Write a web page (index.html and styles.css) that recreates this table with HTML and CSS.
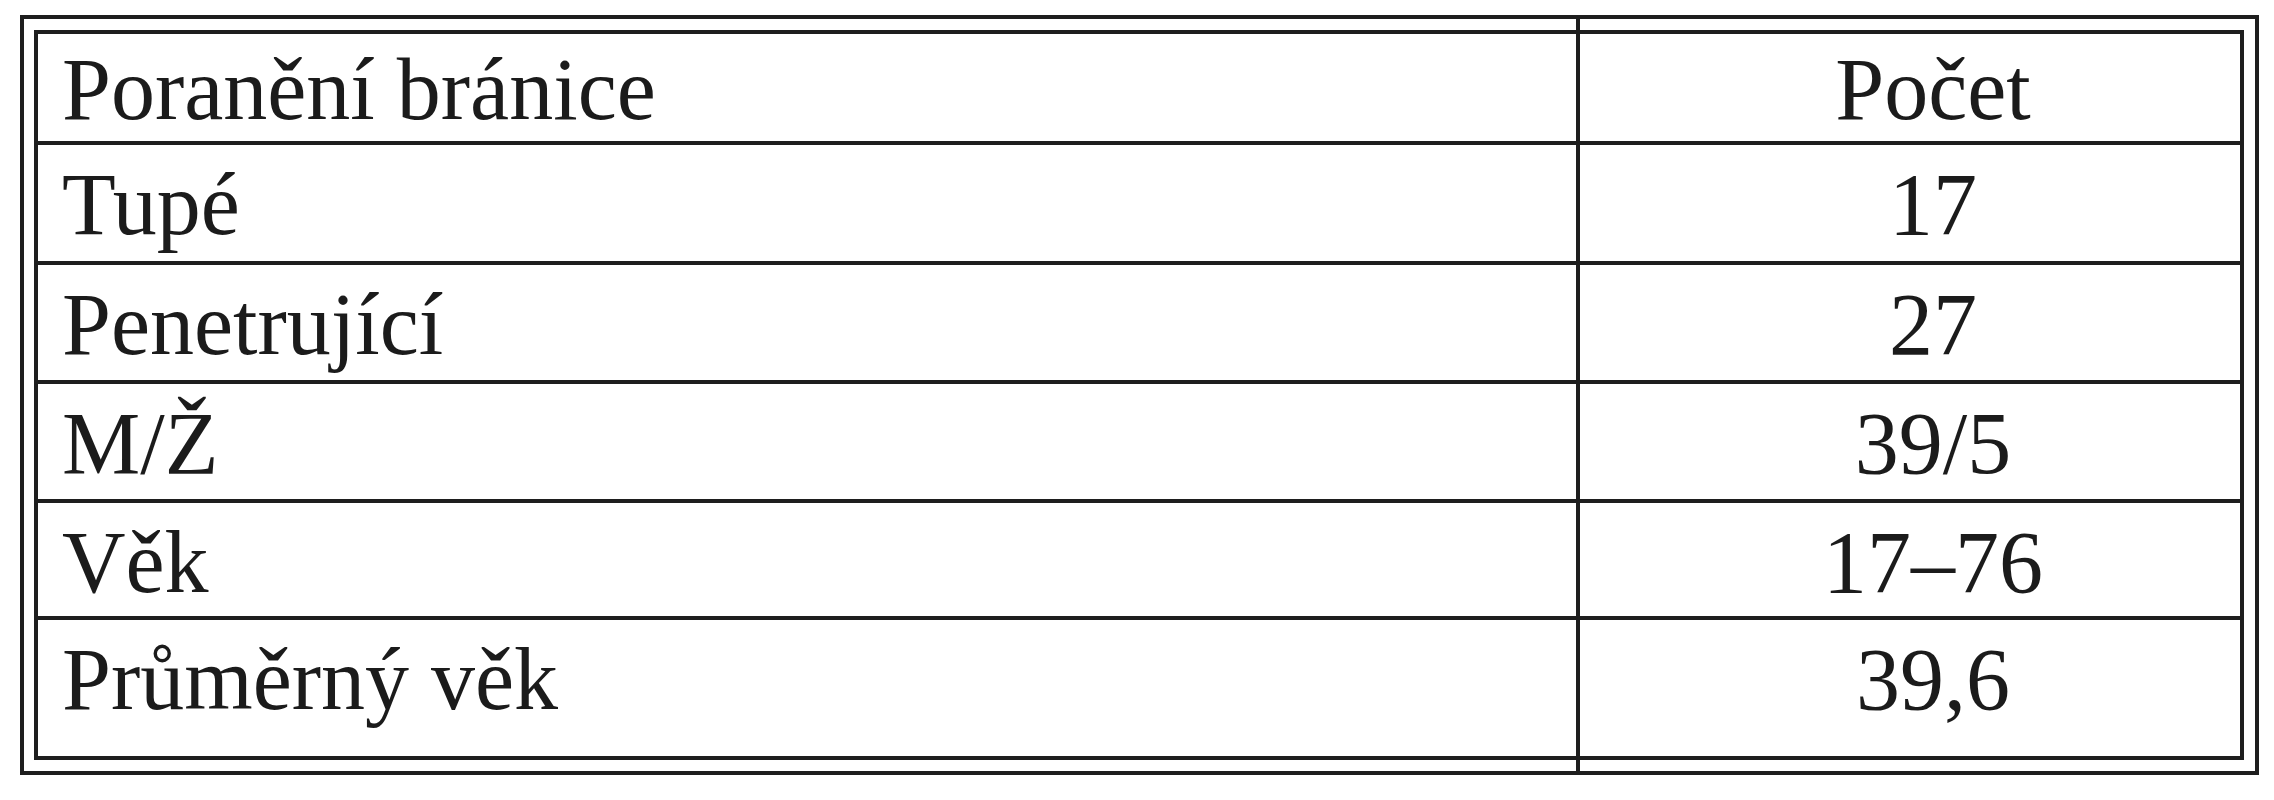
FILE: index.html
```html
<!DOCTYPE html>
<html lang="cs">
<head>
<meta charset="utf-8">
<title>Poranění bránice</title>
<link rel="stylesheet" href="styles.css">
</head>
<body>
<div class="frame">
  <table class="data">
    <colgroup>
      <col class="col-label">
      <col class="col-value">
    </colgroup>
    <tbody>
      <tr class="row-head"><td class="label">Poranění bránice</td><td class="value">Počet</td></tr>
      <tr class="row-a"><td class="label">Tupé</td><td class="value">17</td></tr>
      <tr class="row-b"><td class="label">Penetrující</td><td class="value">27</td></tr>
      <tr class="row-b"><td class="label">M/Ž</td><td class="value">39/5</td></tr>
      <tr class="row-c"><td class="label">Věk</td><td class="value">17–76</td></tr>
      <tr class="row-last"><td class="label">Průměrný věk</td><td class="value">39,6</td></tr>
    </tbody>
  </table>
  <div class="divider"></div>
</div>
</body>
</html>
```
FILE: styles.css
```css
html, body {
  margin: 0;
  padding: 0;
  background: #ffffff;
}

body {
  font-family: "Liberation Serif", "Times New Roman", serif;
  color: #1b1b1b;
}

.frame {
  position: relative;
  box-sizing: border-box;
  width: 2239px;
  margin: 15px 0 0 20px;
  padding: 11px 11px 11px 10px;
  border: 4px solid #1e1e1e;
}

.data {
  box-sizing: border-box;
  width: 2210px;
  table-layout: fixed;
  border-collapse: separate;
  border-spacing: 0;
  border: 4px solid #1e1e1e;
}

.col-label { width: 1542px; }
.col-value { width: 660px; }

.data td {
  box-sizing: border-box;
  vertical-align: top;
  font-size: 88px;
  line-height: 88px;
  padding: 16px 0 0 0;
  border-bottom: 4px solid #1e1e1e;
  white-space: nowrap;
}

.data td.label {
  padding-left: 24px;
  text-align: left;
}

.data td.value {
  padding-left: 46px;
  text-align: center;
}

.row-head td { height: 111px; padding-top: 12px; }
.row-a td { height: 120px; }
.row-b td { height: 119px; }
.row-c td { height: 117px; }
.row-last td { height: 136px; border-bottom: none; }

.divider {
  position: absolute;
  top: 0;
  bottom: 0;
  left: 1552px;
  width: 4px;
  background: #1e1e1e;
}
```
